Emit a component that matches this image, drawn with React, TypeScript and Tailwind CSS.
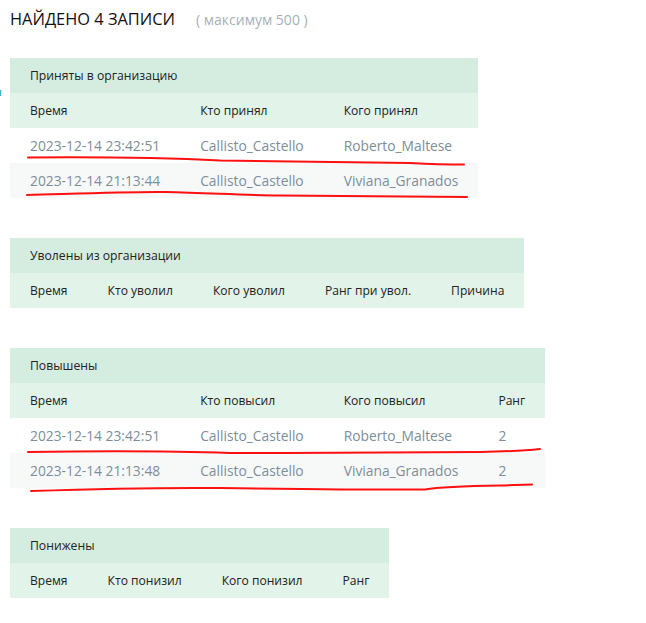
import React from "react";

type Section = {
  title: string;
  headers: string[];
  rows: string[][];
};

const sections: Section[] = [
  {
    title: "Приняты в организацию",
    headers: ["Время", "Кто принял", "Кого принял"],
    rows: [
      ["2023-12-14 23:42:51", "Callisto_Castello", "Roberto_Maltese"],
      ["2023-12-14 21:13:44", "Callisto_Castello", "Viviana_Granados"],
    ],
  },
  {
    title: "Уволены из организации",
    headers: ["Время", "Кто уволил", "Кого уволил", "Ранг при увол.", "Причина"],
    rows: [],
  },
  {
    title: "Повышены",
    headers: ["Время", "Кто повысил", "Кого повысил", "Ранг"],
    rows: [
      ["2023-12-14 23:42:51", "Callisto_Castello", "Roberto_Maltese", "2"],
      ["2023-12-14 21:13:48", "Callisto_Castello", "Viviana_Granados", "2"],
    ],
  },
  {
    title: "Понижены",
    headers: ["Время", "Кто понизил", "Кого понизил", "Ранг"],
    rows: [],
  },
];

function Table({ s }: { s: Section }) {
  return (
    <table className="border-collapse ml-[10px]">
      <thead>
        <tr className="bg-[#d5ede0] h-[35px]">
          <th
            colSpan={s.headers.length}
            className="px-5 pt-[2px] text-left font-normal text-[12.2px] text-[#222]"
          >
            {s.title}
          </th>
        </tr>
        <tr className="bg-[#e2f3ea] h-[35px]">
          {s.headers.map((h) => (
            <th
              key={h}
              className="px-5 pt-[2px] text-left font-normal text-[12.1px] text-[#222] whitespace-nowrap"
            >
              {h}
            </th>
          ))}
        </tr>
      </thead>
      <tbody>
        {s.rows.map((r, i) => (
          <tr
            key={i}
            className={i % 2 === 1 ? "bg-[#f7f9f9] h-[35px]" : "bg-white h-[35px]"}
          >
            {r.map((c, j) => (
              <td
                key={j}
                className="px-5 pt-[2px] text-left text-[13.8px] text-[#7d8e99] whitespace-nowrap"
              >
                {c}
              </td>
            ))}
          </tr>
        ))}
      </tbody>
    </table>
  );
}

export default function App() {
  return (
    <div
      className="relative w-[646px] h-[623px] bg-white overflow-hidden"
      style={{ fontFamily: '"Open Sans", "Noto Sans", sans-serif' }}
    >
      <div className="flex items-baseline pt-[7px] pl-[10px] h-[58px]">
        <span className="text-[16.4px] text-[#111]">НАЙДЕНО 4 ЗАПИСИ</span>
        <span className="ml-[21px] text-[14px] text-[#a7b0b6]">( максимум 500 )</span>
      </div>
      <div className="flex flex-col items-start gap-[40px]">
        {sections.map((s) => (
          <Table key={s.title} s={s} />
        ))}
      </div>
      <svg
        className="absolute left-0 top-0 pointer-events-none"
        width={646}
        height={623}
        viewBox="0 0 646 623"
        fill="none"
      >
        <line x1="0.5" y1="90" x2="0.5" y2="96" stroke="#3bb3d0" strokeWidth="1.5" />
        <path
          d="M28 157.5 C 90 157, 170 158, 220 160.5 C 300 162, 360 162, 410 163 C 430 164, 450 164.5, 464 164.5"
          stroke="#ff1010"
          strokeWidth="2"
          strokeLinecap="round"
        />
        <path
          d="M27 195 C 80 193.5, 130 191.5, 165 192 C 210 193, 240 195, 280 195.5 C 360 196, 420 196.5, 467 197"
          stroke="#ff1010"
          strokeWidth="2"
          strokeLinecap="round"
        />
        <path
          d="M28 452 C 100 451, 170 451, 230 453 C 320 453, 420 452.5, 480 452 C 505 451.5, 525 450.5, 540 449"
          stroke="#ff1010"
          strokeWidth="2"
          strokeLinecap="round"
        />
        <path
          d="M31 491 C 90 489, 160 487.5, 220 488 C 300 489, 380 490, 425 489.5 C 440 487, 470 486, 500 485.5 C 515 485, 525 484.5, 532 484.5"
          stroke="#ff1010"
          strokeWidth="2"
          strokeLinecap="round"
        />
      </svg>
    </div>
  );
}
